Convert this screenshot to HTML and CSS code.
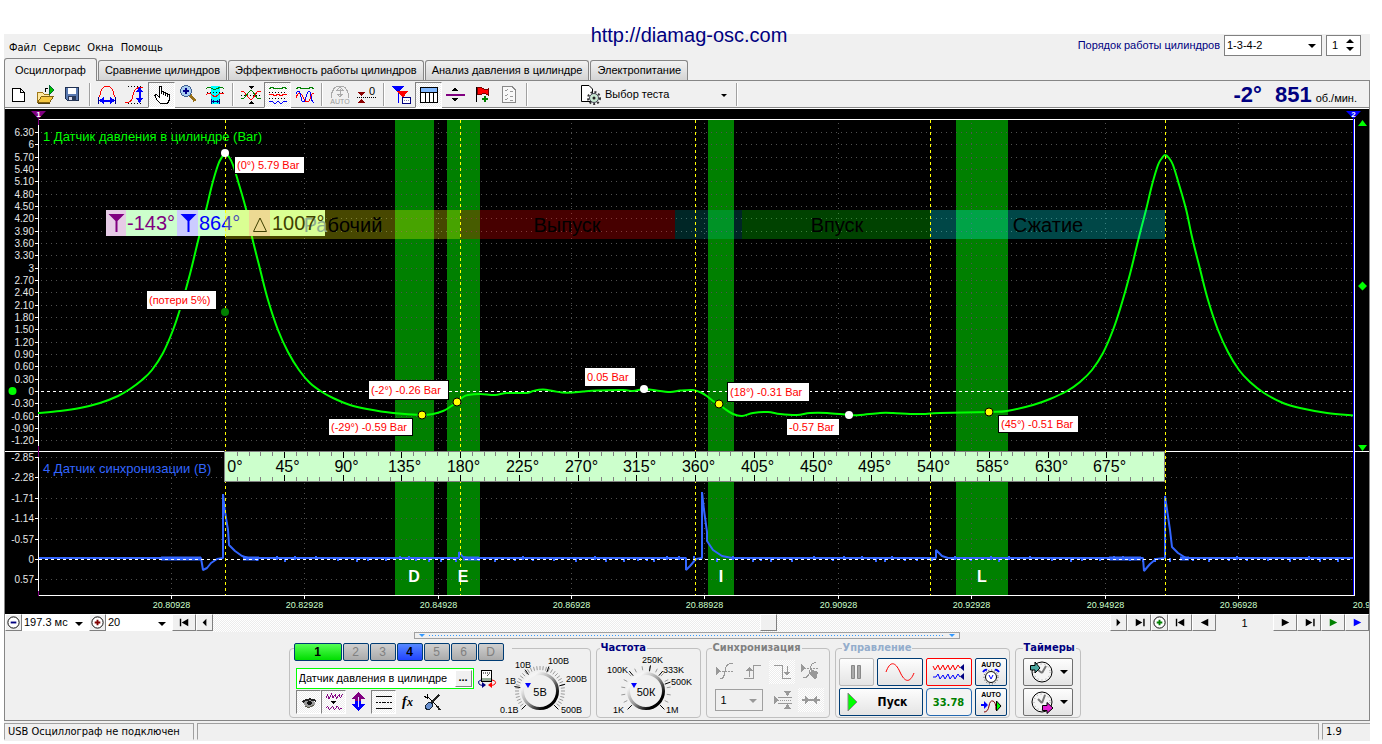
FILE: index.html
```html
<!DOCTYPE html>
<html lang="ru">
<head>
<meta charset="utf-8">
<title>USB Осциллограф</title>
<link rel="stylesheet" href="styles.css">
</head>
<body>
<header class="banner"><a href="#site">http://diamag-osc.com</a></header>
<main class="app">
  <div class="menubar">
    <nav class="menu">
      <button>Файл</button><button>Сервис</button><button>Окна</button><button>Помощь</button>
    </nav>
    <div class="order">
      <label for="order">Порядок работы цилиндров</label>
      <span class="pick order-pick"><select id="order"><option>1-3-4-2</option></select></span>
      <span class="spin"><input id="cyl" type="text" value="1" aria-label="Цилиндр"><span class="spin-arrows"><i class="up"></i><i class="down"></i></span></span>
    </div>
  </div>
  <div class="tabs" role="tablist">
    <button class="tab active" role="tab">Осциллограф</button>
    <button class="tab" role="tab">Сравнение цилиндров</button>
    <button class="tab" role="tab">Эффективность работы цилиндров</button>
    <button class="tab" role="tab">Анализ давления в цилиндре</button>
    <button class="tab" role="tab">Электропитание</button>
  </div>
  <div class="frame">
    <div class="toolbar">
      <button class="tool" aria-label="Новый"><svg viewBox="0 0 24 24"><path d="M5.500 5.500H13.500L17.500 9.500V18.500H5.500ZM13.500 5.500V9.500H17.500" fill="#fff" stroke="#000"/></svg></button>
      <button class="tool" aria-label="Открыть"><svg viewBox="0 0 24 24"><path d="M3.500 19.500V9.500H8.500L10.500 11.500H15.500V13.500" fill="#ffe9a0" stroke="#a07818"/><path d="M3.500 19.500L7.500 13.500H19.500L15.500 19.500Z" fill="#f5c842" stroke="#806010"/><path d="M4 20H16" stroke="#504010"/><path d="M12 9Q10 5 14 5" stroke="#000" fill="none"/><path d="M15 2L20 7L15 12Z" fill="#00c000" stroke="#063"/></svg></button>
      <button class="tool" aria-label="Сохранить"><svg viewBox="0 0 24 24"><path d="M4.500 4.500H17.500V17.500H6.500L4.500 15.500Z" fill="#5878b0" stroke="#203050"/><rect x="7" y="5" width="8" height="6" fill="#fff"/><rect x="7" y="13" width="8" height="5" fill="#283858"/><rect x="8" y="14" width="3" height="3" fill="#dde"/></svg></button>
      <span class="sep"></span>
      <button class="tool" aria-label="Автоширина"><svg viewBox="0 0 24 24"><path d="M2.500 15C4 14 4 11 5 8Q7 3 11 3T17 8C18 11 18 14 19.500 15" fill="none" stroke="red"/><path d="M6 17.500H16" stroke="#00f" stroke-width="2"/><path d="M3 17.500L8 14V21ZM19 17.500L14 14V21Z" fill="#00f"/><path d="M2.500 14V21M19.500 14V21" stroke="#008"/></svg></button>
      <button class="tool" aria-label="Автовысота"><svg viewBox="0 0 24 24"><path d="M5 3.500H20M5 20.500H20" stroke="#000" stroke-dasharray="1 2"/><path d="M2 20C8 20 9 17 10 12S13 4 20 4" fill="none" stroke="red"/><path d="M16.500 8V17" stroke="#00f" stroke-width="2"/><path d="M16.500 4L20 9H13ZM16.500 20L20 15H13Z" fill="#00f"/></svg></button>
      <button class="tool on" aria-label="Рука"><svg viewBox="0 0 24 24"><path d="M9.500 14.500V4.500Q9.500 3.500 10.500 3.500T11.500 4.500V10.500V8.500H13.500V11.500V9.500H15.500V12.500V10.500H17.500V13.500V11.500H19.500V16.500L17.500 20.500H10.500L7.500 17.500L4.500 12.500L6.500 11.500L9.500 14.500Z" fill="#fff" stroke="#000"/></svg></button>
      <button class="tool" aria-label="Лупа"><svg viewBox="0 0 24 24"><path d="M13 12L18 18" stroke="#987018" stroke-width="3"/><circle cx="9" cy="8" r="5.500" fill="#a8cdf0" stroke="#406090" stroke-width="1"/><path d="M9 5V11M6 8H12" stroke="#008" stroke-width="2"/></svg></button>
      <button class="tool" aria-label="Область"><svg viewBox="0 0 24 24"><rect x="7" y="3" width="9" height="18" fill="#0ff"/><path d="M2 6Q4 3 7 5T12 6T18 4L20 6" fill="none" stroke="green"/><path d="M3 9.500H20" stroke="#000" stroke-dasharray="1 2"/><path d="M2 12Q5 9 8 12T14 12T20 11" fill="none" stroke="red"/><path d="M7.500 16V21M15.500 16V21M8 18.500H15" stroke="#000080" fill="none"/><path d="M8 18.500L10 17V20ZM15 18.500L13 17V20Z" fill="#008"/></svg></button>
      <span class="sep"></span>
      <button class="tool" aria-label="Совместить"><svg viewBox="0 0 24 24"><path d="M9 3H15L12 6ZM9 21H15L12 18Z" fill="#000"/><path d="M2 12.500H22" stroke="#000" stroke-dasharray="1 2"/><path d="M2 8L5 9L10 15Q12 18 14 15L18 9L22 8" fill="none" stroke="red"/><path d="M2 16L5 15L10 9Q12 6 14 9L18 15L22 16" fill="none" stroke="green"/></svg></button>
      <button class="tool on" aria-label="Раздельно"><svg viewBox="0 0 24 24"><path d="M3 6L6 4L9 6L12 5L15 6L18 4L21 6" fill="none" stroke="green"/><path d="M3 9.500H21M3 15.500H21" stroke="#000" stroke-dasharray="1 2"/><path d="M3 12L6 11L9 13L12 11L15 13L18 11L21 12" fill="none" stroke="red"/><path d="M3 19L6 18L9 21L12 18L15 21L18 18L21 19" fill="none" stroke="#00f"/></svg></button>
      <button class="tool" aria-label="Наложение"><svg viewBox="0 0 24 24"><path d="M3 6L6 4L9 6L12 5L15 6L18 4L21 6" fill="none" stroke="green"/><path d="M3 15C5 9 8 9 10 14S15 21 17 16S19 10 21 10" fill="none" stroke="red"/><path d="M3 11C5 6 7 8 8 14S11 21 13 14S17 6 18 13S20 19 21 20" fill="none" stroke="#00f"/></svg></button>
      <span class="sep"></span>
      <button class="tool" aria-label="Авто" disabled><svg viewBox="0 0 24 24"><path d="M3 15Q4 3 12 3T21 15M12 6V13M12 4L15 7H9ZM12 14L15 11H9Z" fill="none" stroke="#aaa"/><text x="12" y="21" class="t7" fill="#999" text-anchor="middle">AUTO</text></svg></button>
      <button class="tool" aria-label="Ноль"><svg viewBox="0 0 24 24"><path d="M2 9H10L6 13ZM2 20H10L6 16Z" fill="#8b0000"/><path d="M2 14.500H21" stroke="#000" stroke-dasharray="1 1"/><text x="14" y="12" class="t11">0</text></svg></button>
      <span class="sep"></span>
      <button class="tool" aria-label="Маркеры"><svg viewBox="0 0 24 24"><path d="M8.500 8V20" stroke="#00f"/><path d="M2 3H14L8 10Z" fill="#00f"/><path d="M7 8H18L13 15Z" fill="red"/><path d="M12.500 12V19" stroke="red"/><rect x="12.500" y="14.500" width="8" height="6" fill="#fff" stroke="#000080"/><path d="M14 17.500H19" stroke="#88a" stroke-dasharray="1 1"/></svg></button>
      <button class="tool on" aria-label="Таблица"><svg viewBox="0 0 24 24"><rect x="3.500" y="4.500" width="17" height="15" fill="#fff" stroke="#000"/><rect x="4" y="5" width="16" height="4" fill="#80b8ff"/><path d="M3 9.500H21M8.500 9V19M12.500 9V19M16.500 9V19" stroke="#000"/></svg></button>
      <button class="tool" aria-label="Разделитель"><svg viewBox="0 0 24 24"><path d="M8 8L11 4L14 8ZM8 15L11 19L14 15Z" fill="#000"/><path d="M2 12H21" stroke="purple" stroke-width="2"/></svg></button>
      <button class="tool" aria-label="Флаг"><svg viewBox="0 0 24 24"><path d="M5.500 4V19" stroke="#000" stroke-width="1"/><path d="M6 5Q9 3 11 5T17 6V12Q14 10 11 11T6 11Z" fill="red" stroke="#700"/><path d="M14 13V19M11 16H17" stroke="green" stroke-width="2"/></svg></button>
      <button class="tool" aria-label="Проверки" disabled><svg viewBox="0 0 24 24"><path d="M4.500 3.500H14L17.500 7V19.500H4.500Z" fill="#f8f8f8" stroke="#888"/><path d="M7 7L8 8L10 6M7 12L8 13L10 11M7 16L8 17L10 15M12 8H15M12 13H15M12 17H15" fill="none" stroke="#999"/></svg></button>
      <span class="sep"></span>
      <div class="test">
        <svg viewBox="0 0 22 24" class="test-icon" aria-hidden="true"><path d="M1.500 2.500H9L12.500 6V18.500H1.500Z" fill="#fff" stroke="#000"/><circle cx="14" cy="15" r="4.500" fill="#c8e8d0" stroke="#445" stroke-width="1"/><circle cx="14" cy="15" r="6" fill="none" stroke="#333" stroke-width="2" stroke-dasharray="2 2"/><circle cx="14" cy="15" r="1.500" fill="#222"/></svg>
        <span class="pick test-pick"><select aria-label="Тест"><option>Выбор теста</option></select></span>
      </div>
      <span class="sep"></span>
      <div class="rpm"><b>-2°</b><b>851</b><span>об./мин.</span></div>
    </div>

    <svg id="scope" class="scope" viewBox="5 109 1364 505" role="img" aria-label="Осциллограмма"></svg>

    <div class="scroll">
      <button class="bev round" aria-label="Уменьшить"><svg viewBox="0 0 16 16"><circle cx="8" cy="8" r="6" fill="#fff" stroke="#000"/><path d="M5 8H11" stroke="#000080" stroke-width="2"/></svg></button>
      <span class="pick time-pick"><select aria-label="Развёртка"><option>197.3 мс</option></select></span>
      <button class="bev round" aria-label="Увеличить"><svg viewBox="0 0 16 16"><circle cx="8" cy="8" r="6" fill="#fff" stroke="#000"/><path d="M5 8H11M8 5V11" stroke="#800000" stroke-width="2"/></svg></button>
      <span class="pick count-pick"><select aria-label="Число"><option>20</option></select></span>
      <button class="bev wide" aria-label="В начало"><svg viewBox="0 0 16 16"><path d="M3 4H4.500V12H3ZM12 4V12L5 8Z"/></svg></button>
      <button class="bev" aria-label="Влево"><svg viewBox="0 0 16 16"><path d="M10 4V12L6 8Z"/></svg></button>
      <div class="track"><span class="thumb bev"></span></div>
      <button class="bev" aria-label="Вправо"><svg viewBox="0 0 16 16"><path d="M6 4V12L10 8Z"/></svg></button>
      <button class="bev wide" aria-label="В конец"><svg viewBox="0 0 16 16"><path d="M12 4H13.500V12H12ZM4 4V12L11 8Z"/></svg></button>
      <button class="bev round" aria-label="Добавить"><svg viewBox="0 0 16 16"><circle cx="8" cy="8" r="6" fill="#fff" stroke="#000"/><path d="M5 8H11M8 5V11" stroke="green" stroke-width="2"/></svg></button>
      <button class="bev wide" aria-label="Первый"><svg viewBox="0 0 16 16"><path d="M3 4H4.500V12H3ZM12 4V12L5 8Z"/></svg></button>
      <button class="bev wide" aria-label="Назад"><svg viewBox="0 0 16 16"><path d="M12 4V12L4 8Z"/></svg></button>
      <output class="page">1</output>
      <button class="bev wide" aria-label="Вперёд"><svg viewBox="0 0 16 16"><path d="M4 4V12L12 8Z"/></svg></button>
      <button class="bev wide" aria-label="Последний"><svg viewBox="0 0 16 16"><path d="M12 4H13.500V12H12ZM4 4V12L11 8Z"/></svg></button>
      <button class="bev wide" aria-label="Воспроизвести"><svg viewBox="0 0 16 16"><path d="M4 4V12L12 8Z" fill="green"/></svg></button>
      <button class="bev wide" aria-label="Далее"><svg viewBox="0 0 16 16"><path d="M4 4V12L12 8Z" fill="#00f"/></svg></button>
    </div>

    <div class="splitter"><i></i><span></span><i></i></div>

    <div class="panel">
      <fieldset class="group channels">
        <legend>
          <button class="ch ch1">1</button><button class="ch">2</button><button class="ch">3</button><button class="ch ch4">4</button><button class="ch">5</button><button class="ch">6</button><button class="ch">D</button>
        </legend>
        <div class="ch-left">
          <div class="ch-name">
            <div class="name-box"><input type="text" value="Датчик давления в цилиндре" aria-label="Имя канала"><button class="bev dots" aria-label="Выбрать">...</button></div>
            <button class="swap" aria-label="Прибор"><svg viewBox="0 0 22 24"><rect x="5.500" y="3.500" width="10" height="11" fill="#fff" stroke="#000"/><rect x="6" y="11" width="9" height="3" fill="#9ab09a"/><path d="M7 6H14M11 9L13 7" stroke="#000" stroke-dasharray="1 1"/><path d="M5 13Q1 14 3 17Q5 19 7 18" stroke="#000080" fill="none"/><path d="M6 15L10 18L6 21Z" fill="#000080"/><path d="M16 13Q21 14 19 17Q17 19 15 18" stroke="red" fill="none"/><path d="M16 15L12 18L16 21Z" fill="red"/></svg></button>
          </div>
          <div class="ch-tools">
            <button class="tool on" aria-label="Видимость"><svg viewBox="0 0 24 24"><ellipse cx="13" cy="13.500" rx="6" ry="4" fill="#999"/><path d="M6 12Q12 7 20 11" stroke="#222" stroke-width="2" fill="none"/><circle cx="13" cy="13" r="2.500" fill="#111"/><path d="M8 17Q13 19 18 15" stroke="#554" fill="none"/></svg></button>
            <button class="tool on" aria-label="Фильтр"><svg viewBox="0 0 24 24"><path d="M4 8L6 4L7 9L10 3L11 8L14 4L15 9L18 4L19 8L21 4" fill="none" stroke="purple"/><path d="M9 11H15L12 14Z"/><path d="M4 18L6 17L8 20L11 16L13 20L16 16L18 20L21 18" fill="none" stroke="purple"/></svg></button>
            <button class="tool" aria-label="Инверсия"><svg viewBox="0 0 24 24"><path d="M12 2L19 9H15V12H9V9H5Z" fill="purple"/><path d="M12 21L19 14H15V11H9V14H5Z" fill="#00f"/><path d="M12 7V17" stroke="#ddf"/></svg></button>
            <button class="tool on" aria-label="Уровни"><svg viewBox="0 0 24 24"><path d="M4 6.500H21M4 18.500H21" stroke="#000"/><path d="M4 12.500H21" stroke="#000" stroke-dasharray="2 1"/></svg></button>
            <button class="tool" aria-label="Функция"><svg viewBox="0 0 24 24"><text x="6" y="16" class="fx">f</text><text x="11" y="16" class="fx2">x</text></svg></button>
            <button class="tool" aria-label="Настройка"><svg viewBox="0 0 24 24"><path d="M6 6L18 18M6 4V8L3 6" stroke="#000" fill="none" stroke-width="1"/><path d="M18 5L10 13" stroke="#222" stroke-width="2"/><path d="M16 16L19 20" stroke="#222" stroke-width="2"/><ellipse cx="8" cy="16" rx="3" ry="4" transform="rotate(40 8 16)" fill="#6890d0" stroke="#123"/></svg></button>
          </div>
        </div>
        <svg class="knob volts" viewBox="500 654 90 63" role="img" aria-label="Предел 5В"></svg>
      </fieldset>

      <fieldset class="group freq">
        <legend>Частота</legend>
        <svg class="knob rate" viewBox="600 654 96 63" role="img" aria-label="Частота 50К"></svg>
      </fieldset>

      <fieldset class="group sync" disabled>
        <legend>Синхронизация</legend>
        <div class="sync-row">
          <button class="tool" aria-label="Уровень"><svg viewBox="0 0 24 24"><path d="M3 7V15L8 11Z" fill="#999"/><path d="M3 11.500H21" stroke="#999" stroke-dasharray="2 1"/><path d="M7 18Q11 20 12 11T20 4" fill="none" stroke="#999"/></svg></button>
          <button class="tool" aria-label="Фронт"><svg viewBox="0 0 24 24"><path d="M3 18.500H12.500V5.500H20M8.500 17V9" fill="none" stroke="#999"/><path d="M5 11L8.500 7L12 11Z" fill="#999"/></svg></button>
          <button class="tool hatch" aria-label="Спад"><svg viewBox="0 0 24 24"><path d="M4 5.500H12.500V18.500H21M17 6V14" fill="none" stroke="#999"/><path d="M13.500 12L17 16L20.500 12Z" fill="#999"/></svg></button>
          <button class="tool" aria-label="Ручной"><svg viewBox="0 0 24 24"><path d="M3 4V12L8 8ZM13 9L20 12L19 17L17 19L12 15Z" fill="#999"/><path d="M3 8.500H20" stroke="#999" stroke-dasharray="2 1"/><path d="M5 18Q11 18 12 10T18 3" fill="none" stroke="#999"/></svg></button>
        </div>
        <div class="sync-row">
          <span class="pick sync-pick"><select aria-label="Канал синхронизации"><option>1</option></select></span>
          <button class="tool" aria-label="Порог"><svg viewBox="0 0 24 24"><path d="M2 8V16L6 12ZM12 3H19L15.500 8ZM12 21H19L15.500 16Z" fill="#999"/><path d="M6 9.500H20M6 15.500H20" stroke="#999"/><path d="M6 12.500H20" stroke="#999" stroke-dasharray="1 1"/></svg></button>
          <button class="tool hatch" aria-label="Сжать"><svg viewBox="0 0 24 24"><path d="M3 12H21" stroke="#999" stroke-width="2"/><path d="M6 8V16L11 12ZM18 8V16L13 12Z" fill="#999"/></svg></button>
        </div>
      </fieldset>

      <fieldset class="group control">
        <legend>Управление</legend>
        <div class="control-grid">
          <button class="xp off" aria-label="Пауза" disabled><svg viewBox="0 0 24 24"><path d="M7.500 5.500H10.500V18.500H7.500ZM13.500 5.500H16.500V18.500H13.500Z" fill="#aaa" stroke="#888"/></svg></button>
          <button class="xp" aria-label="Синус"><svg viewBox="0 0 36 24" class="w36"><path d="M4 12C8 1 13 1 18 12S28 23 32 13" fill="none" stroke="red"/></svg></button>
          <button class="xp red" aria-label="Потоки"><svg viewBox="0 0 36 24" class="w36"><path d="M2 6L4 10L7 5L9 10L12 5L14 10L17 5L19 10L22 5L24 10L27 5L29 8" fill="none" stroke="red"/><path d="M2 17H5L7 14L9 19L12 15L14 19L17 14L19 19L22 15L24 19L27 14L29 17" fill="none" stroke="#00f"/><path d="M33 4V11L29 7.500ZM33 13V20L29 16.500Z" fill="#000080"/></svg></button>
          <button class="xp" aria-label="Авто предел"><svg viewBox="0 0 26 26" class="w26"><text x="13" y="8" class="t7b" text-anchor="middle">AUTO</text><circle cx="13" cy="18" r="5.500" fill="#fff" stroke="#000" stroke-width="1"/><circle cx="13" cy="18" r="7" fill="none" stroke="#444" stroke-dasharray="1 2"/><path d="M11 16L13 20L15 16" stroke="#00f" fill="none"/><path d="M5 13Q7 10 9 11M21 13Q19 10 17 11" stroke="#00f" stroke-width="2" fill="none"/></svg></button>
          <button class="xp start"><svg viewBox="0 0 16 24" class="w16"><path d="M3 3L12 12L3 21Z" fill="#0f0" stroke="#888"/></svg>Пуск</button>
          <output class="xp value">33.78</output>
          <button class="xp" aria-label="Авто пуск"><svg viewBox="0 0 26 26" class="w26"><text x="13" y="8" class="t7b" text-anchor="middle">AUTO</text><path d="M3 16H7" stroke="#00f" stroke-width="2"/><path d="M6 12V20L10 16Z" fill="#00f"/><path d="M6 23Q10 23 11 17T15 12T18 21" fill="none" stroke="#800000"/><path d="M18.500 12V22L23 17Z" fill="#0f0" stroke="#000"/></svg></button>
        </div>
      </fieldset>

      <fieldset class="group timers">
        <legend>Таймеры</legend>
        <div class="timer-col">
          <button class="xp gray" aria-label="Таймер запуска"><svg viewBox="0 0 26 26" class="w26"><circle cx="14" cy="13" r="10" fill="#f4f4f4" stroke="#000"/><circle cx="14" cy="13" r="8" fill="none" stroke="#999" stroke-dasharray="1 3"/><path d="M14 14L18 7M14 14L10 11" stroke="#777" stroke-width="2"/><path d="M2.500 6.500H7V3L12 9L7 14V11H2.500Z" fill="#4ba8a0" stroke="#000"/></svg><i class="caret"></i></button>
          <button class="xp gray" aria-label="Таймер остановки"><svg viewBox="0 0 26 26" class="w26"><circle cx="14" cy="13" r="10" fill="#f4f4f4" stroke="#000"/><circle cx="14" cy="13" r="8" fill="none" stroke="#999" stroke-dasharray="1 3"/><path d="M14 14L17 6M14 14L10 10" stroke="#777" stroke-width="2"/><path d="M14.500 16.500H19V13.500L25 19L19 24.500V21.500H14.500Z" fill="#e020d0" stroke="#000"/></svg><i class="caret"></i></button>
        </div>
      </fieldset>
    </div>
  </div>
  <footer class="status">
    <span class="cell state">USB Осциллограф не подключен</span>
    <span class="cell fill"></span>
    <span class="cell version">1.9</span>
  </footer>
</main>
<script src="chart.js"></script>
</body>
</html>
```

FILE: styles.css
```css
* { box-sizing: border-box; }
body {
  margin: 0;
  background: #fff;
  color: #000;
  font: 11px/13px "Liberation Sans", Arial, sans-serif;
}
button, select, input, output { font: inherit; color: inherit; }
button {
  margin: 0;
  padding: 0;
  border: 0;
  background: none;
  display: flex;
  align-items: center;
  justify-content: center;
}
svg { display: block; }

.banner { height: 34px; padding: 24px 4px 0 0; text-align: center; }
.banner a {
  position: relative;
  color: #000080;
  font-size: 20px;
  line-height: 23px;
  text-decoration: none;
}
.app { margin: 0 12px 0 4px; background: #f0f0f0; }

.menubar { display: flex; justify-content: space-between; height: 24px; padding-right: 9px; }
.menu { display: flex; gap: 7px; padding: 2px 0 0 5px; font-family: "DejaVu Sans Condensed", "DejaVu Sans", sans-serif; font-size: 11px; }
.order { display: flex; gap: 4px; height: 22px; align-items: center; }
.order label { color: #000080; }

.pick { position: relative; display: flex; }
.pick select {
  appearance: none;
  width: 100%;
  height: 100%;
  margin: 0;
  padding: 0 14px 0 2px;
  border: 0;
  border-radius: 0;
  background: #fff;
}
.pick::after {
  content: "";
  position: absolute;
  right: 6px;
  top: 50%;
  margin-top: -1px;
  border: 4px solid transparent;
  border-top-color: #000;
  border-bottom: 0;
  pointer-events: none;
}
.order-pick { width: 98px; height: 21px; }
.order-pick select { border: 1px solid #808080; }
.spin { display: flex; width: 35px; height: 21px; border: 1px solid #808080; background: #fff; }
.spin input { width: 19px; padding: 0 0 0 5px; border: 0; background: none; }
.spin-arrows { display: flex; flex-direction: column; justify-content: center; gap: 4px; }
.spin-arrows i { border: 4px solid transparent; }
.spin-arrows .up { border-top: 0; border-bottom-color: #000; }
.spin-arrows .down { border-bottom: 0; border-top-color: #000; }

.tabs { display: flex; align-items: flex-end; gap: 1px; height: 22px; }
.tab {
  height: 20px;
  padding: 0 6px;
  border: 1px solid #868686;
  border-bottom: 0;
  border-radius: 3px 3px 0 0;
  background: linear-gradient(#f2f2f2, #d4d4d4);
}
.tab.active { height: 23px; margin-bottom: -1px; padding: 0 10px; background: #f0f0f0; position: relative; }

.frame { border: 1px solid #868686; }
.toolbar {
  display: flex;
  align-items: center;
  height: 28px;
  border-bottom: 1px solid #fff;
  box-shadow: inset 0 -1px #868686;
}
.tool { width: 27px; height: 26px; }
.tool svg { width: 24px; height: 24px; shape-rendering: crispEdges; }
.tool.on, .hatch { background: repeating-conic-gradient(#fff 0 25%, #ececec 0 50%) 0 0 / 2px 2px; }
.tool.on { border: 1px solid; border-color: #808080 #fff #fff #808080; }
.sep {
  width: 8px;
  height: 23px;
  background: linear-gradient(90deg, #f0f0f0 3px, #a0a0a0 3px, #a0a0a0 4px, #fff 4px, #fff 5px, #f0f0f0 5px);
}
.t7 { font: 7px "Liberation Sans", sans-serif; }
.t7b { font: bold 7px "Liberation Sans", sans-serif; }
.t11 { font: 11px "Liberation Sans", sans-serif; }
.fx { font: italic bold 14px "Liberation Serif", serif; }
.fx2 { font: italic bold 12px "Liberation Serif", serif; }
.test { display: flex; align-items: center; margin-left: 49px; }
.test-icon { width: 22px; height: 24px; }
.test-pick { width: 131px; height: 20px; }
.test-pick select { background: transparent; padding-left: 3px; }
.test-pick::after { border-width: 3px 3px 0; }
.rpm { display: flex; align-items: baseline; margin-left: auto; padding-right: 12px; }
.rpm b { margin-right: 13px; color: #000080; font-size: 22px; line-height: 25px; }
.rpm b + b { margin-right: 4px; }

.scope { width: 100%; height: auto; background: #000; font-family: "Liberation Sans", Arial, sans-serif; }
.grid { stroke: #505050; stroke-dasharray: 1 4; }
.axis { stroke: #fff; }
.zero { stroke: #fff; stroke-dasharray: 3 3; }
.phase-line { stroke: #ff0; stroke-dasharray: 3 3; }
.scope .ylab { font-size: 10px; fill: #e8e8e8; text-anchor: end; }
.scope .xlab { font-size: 9px; fill: #cfc; text-anchor: middle; }
.scope .title { font-size: 13px; }
.scope .phase { font-size: 20px; text-anchor: middle; }
.scope .deg { font-size: 16px; text-anchor: middle; }
.scope .valve { font-size: 16px; font-weight: bold; fill: #fff; text-anchor: middle; }
.scope .mark { font-size: 20px; }
.scope .note { font-size: 11px; fill: #f00; }
.scope .flag { font-size: 8px; font-weight: bold; fill: #fff; text-anchor: middle; }

.scroll { display: flex; height: 18px; background: #f0f0f0; }
.bev {
  flex: none;
  width: 17px;
  height: 17px;
  background: #f0f0f0;
  border: 1px solid;
  border-color: #fff #808080 #808080 #fff;
}
.bev svg { width: 15px; height: 15px; }
.bev.wide { width: 24px; }
.time-pick { width: 67px; height: 17px; }
.count-pick { width: 66px; height: 17px; }
.track { flex: 1; display: flex; background: repeating-conic-gradient(#fff 0 25%, #ececec 0 50%) 0 0 / 2px 2px; }
.thumb { margin-left: 61%; }
.page { width: 57px; line-height: 18px; text-align: center; }

.splitter { display: flex; align-items: center; width: 40%; height: 7px; margin: 0 auto; padding: 0 4px; gap: 4px; border: 1px solid #a0a0a0; }
.splitter i { border: 3px solid transparent; border-top-color: #3399ff; border-bottom: 0; }
.splitter span { flex: 1; height: 1px; background: repeating-linear-gradient(90deg, #3399ff 0 1px, transparent 1px 3px); }

.panel { display: flex; justify-content: center; gap: 5px; padding: 4px 5px 2px 0; }
.group { min-width: 0; height: 75px; margin: 0; padding: 0 4px; border: 1px solid #c0c0c0; border-radius: 4px; display: flex; }
legend { height: 10px; padding: 0 1px; font: bold 11px/10px "DejaVu Sans Condensed", "DejaVu Sans", sans-serif; color: #000080; }
.channels { width: 302px; }
.channels legend { display: flex; gap: 1px; padding: 0 8px 0 0; }
.ch { width: 26px; height: 18px; border: 1px solid #003c74; border-radius: 2px; background: linear-gradient(#d0d0d0, #aaa); color: #808080; font: 12px "Liberation Sans", sans-serif; }
.ch1 { width: 48px; background: linear-gradient(#5f5, #0d0); color: #000; font-weight: bold; }
.ch4 { background: linear-gradient(#58f, #24f); color: #000; font-weight: bold; }
.ch-left { width: 208px; padding: 15px 0 0 2px; }
.ch-name { display: flex; height: 22px; }
.name-box { display: flex; align-items: center; width: 178px; height: 21px; border: 1px solid #0f0; background: #fff; }
.name-box input { width: 158px; padding: 0 2px; border: 0; }
.dots { font-weight: bold; line-height: 8px; padding-bottom: 4px; }
.swap { width: 26px; }
.swap svg { width: 22px; height: 24px; }
.ch-tools { display: flex; }
.ch-tools .tool { width: 25px; height: 24px; }
.knob { width: 90px; height: 63px; flex: none; font-family: "Liberation Sans", sans-serif; }
.knob .lab { font-size: 9px; }
.knob .val { font-size: 11px; text-anchor: middle; }
.volts { margin-left: -1px; }
.freq { width: 105px; padding: 0 3px; }
.rate { width: 96px; }
.sync { width: 124px; flex-wrap: wrap; align-content: flex-start; padding: 5px 5px 0; }
.sync legend { color: #808080; }
.sync-row { display: flex; align-items: center; justify-content: space-between; width: 100%; height: 28px; }
.sync .tool { height: 24px; width: 26px; }
.sync-pick { width: 48px; height: 22px; margin: 0 8px 0 3px; }
.sync-pick select:disabled { border: 1px solid #a0a0a0; background: #f0f0f0; padding-left: 5px; color: #000; opacity: 1; }
.sync-pick::after { border-top-color: #999; }
.control { width: 175px; padding: 5px 3px 0; }
.control legend { color: #94adcc; margin-left: 3px; }
.control-grid { display: grid; grid-template-columns: 35px 46px 46px 32px; grid-auto-rows: 28px; gap: 2px 3px; height: 58px; }
.xp { display: flex; align-items: center; justify-content: center; border: 1px solid #003c74; border-radius: 2px; background: linear-gradient(#fdfdfd, #e4e4e4); }
.xp svg { width: 24px; height: 24px; }
.xp .w36 { width: 36px; }
.xp .w26 { width: 26px; height: 26px; }
.xp .w16 { width: 16px; }
.xp.off { border-color: #b8b8b8; }
.xp.red { border-color: #f00; }
.start { grid-column: span 2; gap: 17px; font: bold 12px "DejaVu Sans Condensed", sans-serif; padding-right: 9px; }
.value { border-color: #2468b0; border-radius: 4px; color: #008000; background: #f4f4f4; font: bold 11px "DejaVu Sans Condensed", sans-serif; }
.timers { width: 66px; padding: 5px 7px 0; }
.timer-col { display: flex; flex-direction: column; gap: 2px; }
.gray { width: 50px; height: 28px; border-color: #707070; gap: 6px; }
.caret { border: 4px solid transparent; border-top-color: #000; border-bottom: 0; }

.status { display: flex; gap: 3px; padding-top: 2px; height: 20px; font-family: "DejaVu Sans Condensed", "DejaVu Sans", sans-serif; }
.cell { height: 17px; line-height: 16px; padding-left: 3px; border: 1px solid; border-color: #a0a0a0 #a0a0a0 #f0f0f0 #a0a0a0; }
.state { width: 190px; white-space: nowrap; }
.fill { flex: 1; }
.version { width: 48px; border-right: 0; }
```

FILE: chart.js
```js
const NS = "http://www.w3.org/2000/svg";

function add(parent, name, attrs, text) {
  const el = document.createElementNS(NS, name);
  for (const key in attrs) el.setAttribute(key, attrs[key]);
  if (text !== undefined) el.textContent = text;
  parent.appendChild(el);
  return el;
}

const scope = document.getElementById("scope");
const line = (x1, y1, x2, y2, cls, extra) =>
  add(scope, "path", { d: `M${x1} ${y1}L${x2} ${y2}`, class: cls, ...extra });
const rect = (x, y, width, height, fill, opacity = 1) =>
  add(scope, "rect", { x, y, width, height, fill, "fill-opacity": opacity });
const label = (x, y, cls, text, fill) =>
  add(scope, "text", fill ? { x, y, class: cls, fill } : { x, y, class: cls }, text);

// Valve windows
const valves = [[395, 39, "D", 414], [447, 33, "E", 463], [708, 26, "I", 721], [956, 52, "L", 982]];
valves.forEach(([x, w]) => rect(x, 120, w, 475, "#008000"));

// Time grid
for (let i = 0; i < 10; i++) {
  const x = Math.floor(171.3 + i * 133.4) + 0.5;
  if (i < 9) {
    line(x, 123, x, 595, "grid");
    line(x, 596, x, 599, "axis");
  }
  label(x, 608, "xlab", (20.80928 + i * 0.02).toFixed(5));
}

// Pressure scale, one division per 0.3 Bar
for (let i = 21; i >= -4; i--) {
  const y = Math.round(391 - i * 12.33) + 0.5;
  line(41, y, 1353, y, i ? "grid" : "zero");
  line(35, y, 38, y, "axis");
  label(34, y + 3, "ylab", i % 10 ? (i * 0.3).toFixed(2) : String(i * 0.3));
}

// Sync sensor scale
for (let i = -5; i <= 1; i++) {
  const y = Math.round(559 + i * 20.4) + 0.5;
  if (i) line(41, y, 1353, y, "grid");
  line(35, y, 38, y, "axis");
  label(34, y + 3, "ylab", i ? (i * 0.57).toFixed(2) : "0");
}

// Frame
line(38, 119.5, 1354, 119.5, "axis");
line(38.5, 119, 38.5, 596, "axis");
line(38, 595.5, 1355, 595.5, "axis");
line(5, 451.5, 1369, 451.5, "axis");
line(1354.5, 119, 1354.5, 596, "axis");
line(1353.5, 119, 1353.5, 595, "", { stroke: "#00f" });
[[119, 125], [446, 457], [591, 596]].forEach(([a, b]) => line(38.5, a, 38.5, b, "", { stroke: "purple" }));

// Pressure curve
const pressure = [[38,413],[60,411],[80,408],[100,403],[118,396],[130,389],[142,380],[152,370],[163,353],[173,330],[181,306],[190,274],[199,237],[206,210],[212,185],[218,165],[222,157],[225,154],[229,157],[233,165],[238,181],[246,209],[252,237],[260,269],[268,300],[278,330],[288,352],[299,370],[310,383],[322,392],[333,398],[350,405],[367,409],[393,413],[422,415],[433,414],[443,411],[450,407],[457,402],[463,397],[468,395],[480,394],[495,395],[507,393],[527,393],[533,391],[543,389.500],[553,391],[562,392.500],[573,392.500],[583,391.500],[597,390.500],[623,390],[633,391],[644,389],[653,390],[670,392],[680,390.500],[693,390],[702,393],[708,397],[713,401],[719,404],[725,409],[733,414],[742,416],[753,413],[768,412],[780,414],[797,415],[810,413],[827,413],[849,415],[860,415],[880,413],[893,413],[910,414],[923,414],[940,413],[989,412],[1007,411],[1033,405],[1050,399],[1067,391],[1080,382],[1092,370],[1103,353],[1113,330],[1121,306],[1130,274],[1139,237],[1146,210],[1152,185],[1158,165],[1162,158],[1165,155],[1169,158],[1173,165],[1178,181],[1186,209],[1192,237],[1200,269],[1208,300],[1218,330],[1228,352],[1239,370],[1250,382],[1264,393],[1283,403],[1300,408],[1327,413],[1353,415.500]];
let d = `M${pressure[0]}`;
for (let i = 0; i < pressure.length - 1; i++) {
  const p0 = pressure[Math.max(i - 1, 0)], p1 = pressure[i], p2 = pressure[i + 1];
  const p3 = pressure[Math.min(i + 2, pressure.length - 1)];
  d += `C${p1[0] + (p2[0] - p0[0]) / 6} ${p1[1] + (p2[1] - p0[1]) / 6} ${p2[0] - (p3[0] - p1[0]) / 6} ${p2[1] - (p3[1] - p1[1]) / 6} ${p2}`;
}
add(scope, "path", { d, fill: "none", stroke: "#0f0", "stroke-width": 2 });

// Sync sensor trace
const blue = { fill: "none", stroke: "#36f", "stroke-width": 2, "stroke-linejoin": "bevel" };
add(scope, "path", { ...blue, d: "M39 558H201L203 570L207 568L211 563L217 559L223 558V494L225 512L228 530L229 545L235 551L242 556L248 558H459V552L463 557L468 558H686V570L690 566L696 559L702 558V492L704 510L707 532V541L713 550L722 556L732 558H936V550L942 556L948 558H1143L1144 571L1150 564L1156 559L1165 558V496L1170 530L1172 547L1178 553L1186 558H1353" });
add(scope, "path", { ...blue, "stroke-width": 4, d: "M161 558.500H201M243 558.500H259M463 558.500H479M1109 558.500H1141M1180 558.500H1189" });
for (let x = 256; x < 1350; x += 7 + (x * 13) % 17) {
  rect(x, 556 + (x % 3), 2, 4, "#36f");
}
line(39, 559.5, 1353, 559.5, "zero");

// Cursor read-outs
rect(106, 210, 219, 26, "#ccffcc");
rect(106, 210, 20, 26, "#e6cce6");
rect(177, 210, 21, 26, "#ccccff");
rect(249, 210, 21, 26, "#e6cccc");
const pin = (x, color) => add(scope, "path", { d: `M${x - 8} 214H${x + 8}L${x + 1} 221V232H${x - 1}V221Z`, fill: color });
pin(116.5, "purple");
pin(188.5, "#00f");
label(127, 230, "mark", "-143°", "purple");
label(199, 230, "mark", "864°", "#00f");

// Stroke phases
rect(225, 210, 235, 29, "#ff0", 0.28);
rect(460, 210, 215, 29, "#f00", 0.28);
rect(675, 210, 67, 29, "#0ff", 0.15);
rect(742, 210, 188, 29, "#0f0", 0.26);
rect(930, 210, 235, 29, "#0ff", 0.28);
const work = label(343, 232, "phase", "");
add(work, "tspan", { fill: "#8fae8f" }, "Ра");
add(work, "tspan", {}, "бочий");
label(567, 232, "phase", "Выпуск");
label(837, 232, "phase", "Впуск");
label(1048, 232, "phase", "Сжатие");
add(scope, "path", { d: "M253.500 231.500L260 218L266.500 231.500Z", fill: "none", stroke: "#404000" });
label(272, 230, "mark", "1007°", "#404000");

[225.5, 460.5, 695.5, 930.5, 1165.5].forEach((x) => line(x, 120, x, 595, "phase-line"));

// Crank angle ruler
add(scope, "rect", { x: 224.5, y: 451.5, width: 940, height: 30, fill: "#ccffcc", stroke: "#808080" });
for (let i = 1; i < 80; i++) {
  const x = Math.round(225 + i * 11.75) + 0.5;
  const major = i % 5 === 0;
  const stroke = major ? "#000" : "#808080";
  const len = major ? 6 : 4;
  line(x, 452, x, 452 + len, "", { stroke });
  line(x, 481, x, 481 - len, "", { stroke });
  if (major) label(x + 3, 472, "deg", i * 9 + "°");
}
label(235, 472, "deg", "0°");

label(43, 141, "title", "1 Датчик давления в цилиндре (Bar)", "#0f0");
label(43, 473, "title", "4 Датчик синхронизации (В)", "#36f");
valves.forEach(([, , name, x]) => label(x, 582, "valve", name));

// Measured points
const dot = (x, y, fill, stroke = "none") => add(scope, "circle", { cx: x, cy: y, r: 4, fill, stroke });
[[225, 153], [644, 389], [849, 415]].forEach(([x, y]) => dot(x, y, "#fff"));
[[422, 415], [457, 402], [719, 404], [989, 412]].forEach(([x, y]) => dot(x, y, "#ff0", "#000"));
dot(225, 312, "#008000");
dot(12.5, 391, "#0f0");

[
  [235, 157, 69, 16, "(0°) 5.79 Bar"],
  [147, 291, 69, 18, "(потери 5%)"],
  [369, 381, 79, 18, "(-2°) -0.26 Bar"],
  [329, 419, 83, 16, "(-29°) -0.59 Bar"],
  [585, 368, 50, 18, "0.05 Bar"],
  [728, 383, 81, 18, "(18°) -0.31 Bar"],
  [787, 419, 52, 16, "-0.57 Bar"],
  [999, 416, 79, 16, "(45°) -0.51 Bar"],
].forEach(([x, y, w, h, text]) => {
  rect(x - 1, y - 1, w + 2, h + 2, "#000");
  rect(x, y, w, h, "#fff");
  label(x + 2, y + h / 2 + 4, "note", text);
});

// Edge handles
add(scope, "path", { d: "M31 111H46L38.500 119Z", fill: "purple" });
add(scope, "path", { d: "M1346 111H1361L1353.500 119Z", fill: "#00f" });
label(38.5, 117, "flag", "1");
label(1353.5, 117, "flag", "2");
add(scope, "path", { d: "M1358 126L1362.500 120L1367 126ZM1358 445L1362.500 451L1367 445ZM1358 286L1362.500 281.500L1367 286L1362.500 290.500Z", fill: "#0f0" });

// Rotary knobs
function knob(selector, cx, cy, step, value, labels, majors) {
  const svg = document.querySelector(selector);
  for (let a = -225; a <= 45; a += step) {
    const r = (a * Math.PI) / 180;
    const c = Math.cos(r), s = Math.sin(r);
    add(svg, "path", { d: `M${cx + 21 * c} ${cy + 21 * s}L${cx + 25 * c} ${cy + 25 * s}`, stroke: "#999" });
  }
  majors.forEach((a) => {
    const r = (a * Math.PI) / 180;
    const c = Math.cos(r), s = Math.sin(r);
    add(svg, "path", { d: `M${cx + 20 * c} ${cy + 20 * s}L${cx + 26 * c} ${cy + 26 * s}`, stroke: "#000" });
  });
  const id = "ring-" + selector.slice(1);
  const grad = add(add(svg, "defs", {}), "linearGradient", { id, x1: 0, y1: 0, x2: 1, y2: 1 });
  add(grad, "stop", { offset: 0.2, "stop-color": "#f4f4f4" });
  add(grad, "stop", { offset: 0.5, "stop-color": "#999" });
  add(grad, "stop", { offset: 0.8, "stop-color": "#000" });
  add(svg, "circle", { cx, cy, r: 17.5, fill: "#f0f0f0", stroke: `url(#${id})`, "stroke-width": 3 });
  add(svg, "path", { d: `M${cx - 15} ${cy - 8}H${cx - 9}L${cx - 12} ${cy - 3}Z`, fill: "#00f" });
  add(svg, "text", { x: cx, y: cy + 5, class: "val" }, value);
  labels.forEach(([x, y, text]) => add(svg, "text", { x, y, class: "lab" }, text));
}
knob(".volts", 541, 692, 7.5, "5В",
  [[516, 669, "10B"], [549, 665, "100B"], [567, 683, "200B"], [562, 714, "500B"], [501, 714, "0.1B"], [506, 685, "1B"]],
  [-225, -170, -125, -70, -15, 45]);
knob(".rate", 646, 692, 18, "50К",
  [[642, 664, "250K"], [607, 674, "100K"], [663, 674, "333K"], [671, 686, "500K"], [613, 714, "1K"], [666, 714, "1M"]],
  [-225, -130, -80, -50, -20, 45]);
```
